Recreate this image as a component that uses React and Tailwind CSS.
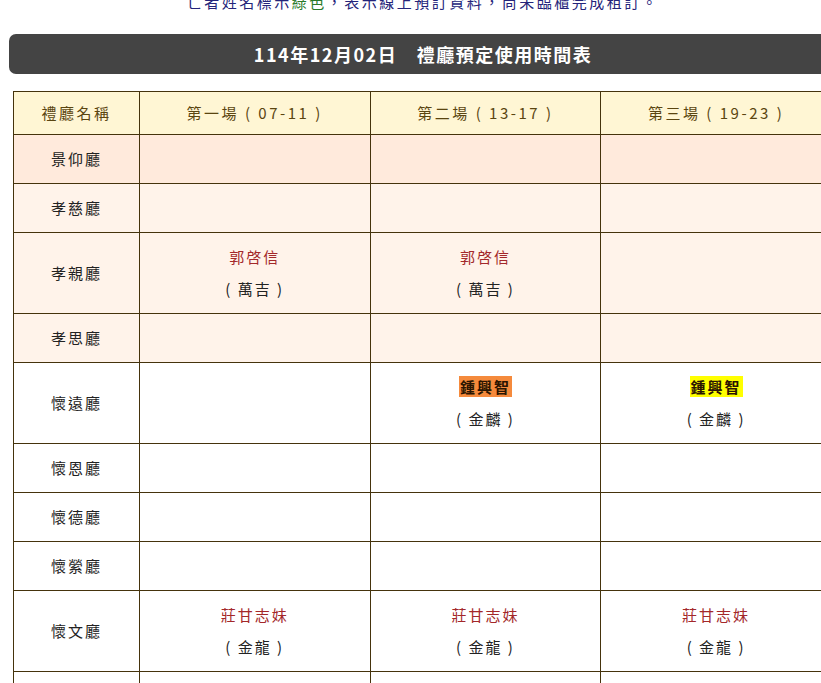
import React from "react";

const font = {
  fontFamily: '"Noto Sans CJK TC", "Noto Sans", sans-serif',
};

const halls = [
  { name: "景仰廳", bg: "bg-[#ffeadc]", tall: false },
  { name: "孝慈廳", bg: "bg-[#fff3ea]", tall: false },
  {
    name: "孝親廳",
    bg: "bg-[#fff3ea]",
    tall: true,
    slots: [
      { who: "郭啓信", from: "萬吉" },
      { who: "郭啓信", from: "萬吉" },
      null,
    ],
  },
  { name: "孝思廳", bg: "bg-[#fff3ea]", tall: false },
  {
    name: "懷遠廳",
    bg: "bg-white",
    tall: true,
    slots: [
      null,
      { who: "鍾興智", from: "金麟", mark: "orange" },
      { who: "鍾興智", from: "金麟", mark: "yellow" },
    ],
  },
  { name: "懷恩廳", bg: "bg-white", tall: false },
  { name: "懷德廳", bg: "bg-white", tall: false },
  { name: "懷縈廳", bg: "bg-white", tall: false },
  {
    name: "懷文廳",
    bg: "bg-white",
    tall: true,
    slots: [
      { who: "莊甘志妹", from: "金龍" },
      { who: "莊甘志妹", from: "金龍" },
      { who: "莊甘志妹", from: "金龍" },
    ],
  },
  { name: "懷念廳", bg: "bg-white", tall: false },
];

const Slot = ({ slot }) => {
  if (!slot) return null;
  let name = (
    <span className="text-[#a3282a] tracking-[2px]">{slot.who}</span>
  );
  if (slot.mark === "orange") {
    name = (
      <span className="bg-[#f58a3c] px-[1px] font-bold text-[#2a1400] tracking-[2px] leading-[21px]">
        {slot.who}
      </span>
    );
  } else if (slot.mark === "yellow") {
    name = (
      <span className="bg-[#ffff00] px-[1px] font-bold text-[#2a1400] tracking-[2px] leading-[21px]">
        {slot.who}
      </span>
    );
  }
  return (
    <div className="flex flex-col items-center">
      <div className="leading-[32px]">{name}</div>
      <div className="leading-[32px] text-[#222] tracking-[2px]">
        ( {slot.from} )
      </div>
    </div>
  );
};

export default function App() {
  return (
    <div className="h-[683px] w-[821px] overflow-hidden bg-white" style={font}>
      <div className="w-[846px]">
        <div className="mt-[-8px] h-[20px] text-center text-[15px] leading-[20px] tracking-[2.5px] text-[#24247a]">
          亡者姓名標示<span className="text-[#2a7a2a]">綠色</span>
          ，表示線上預訂資料，尚未臨櫃完成租訂。
        </div>

        <div className="ml-[9px] mt-[22px] flex h-[40px] w-[828px] items-center justify-center rounded-[7px] bg-[#444444] text-[18px] font-bold tracking-[1.5px] text-white">
          114年12月02日　禮廳預定使用時間表
        </div>

        <table className="ml-[13px] mt-[17px] w-[819px] border-collapse text-center text-[15px]">
          <colgroup>
            <col className="w-[126px]" />
            <col className="w-[231px]" />
            <col className="w-[231px]" />
            <col className="w-[231px]" />
          </colgroup>
          <thead>
            <tr className="h-[43px] bg-[#fff6d4] text-[#5a4510] tracking-[2.5px]">
              <th className="border border-[#45330c] font-normal">禮廳名稱</th>
              <th className="border border-[#45330c] font-normal">
                第一場 ( 07-11 )
              </th>
              <th className="border border-[#45330c] font-normal">
                第二場 ( 13-17 )
              </th>
              <th className="border border-[#45330c] font-normal">
                第三場 ( 19-23 )
              </th>
            </tr>
          </thead>
          <tbody>
            {halls.map((hall) => (
              <tr
                key={hall.name}
                className={`${hall.bg} ${hall.tall ? "h-[81px]" : "h-[49px]"}`}
              >
                <td className="border border-[#45330c] text-[#222] tracking-[2px]">
                  {hall.name}
                </td>
                {[0, 1, 2].map((i) => (
                  <td key={i} className="border border-[#45330c]">
                    <Slot slot={hall.slots ? hall.slots[i] : null} />
                  </td>
                ))}
              </tr>
            ))}
          </tbody>
        </table>
      </div>
    </div>
  );
}
